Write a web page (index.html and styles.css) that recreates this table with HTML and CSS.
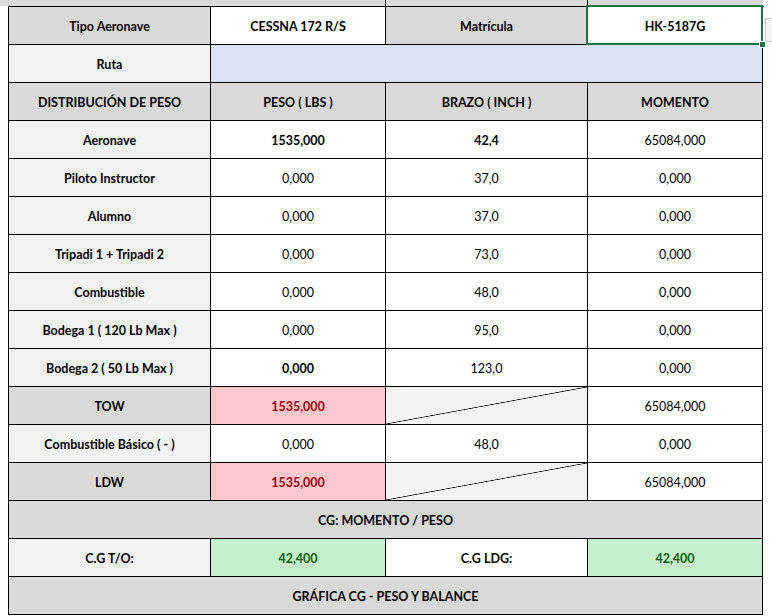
FILE: index.html
```html
<!DOCTYPE html>
<html lang="es">
<head>
<meta charset="utf-8">
<title>Peso y Balance</title>
<link rel="stylesheet" href="styles.css">
</head>
<body>
<div class="strip"><div class="s s1"></div><div class="s s2"></div><div class="s s3"></div></div>
<div class="sheet">
  <div class="c hd b">Tipo Aeronave</div>
  <div class="c b">CESSNA 172 R/S</div>
  <div class="c hd b">Matrícula</div>
  <div class="c b sel">HK-5187G<span class="handle"></span><span class="qa"><span class="qa-dash"></span></span></div>

  <div class="c lb b">Ruta</div>
  <div class="c blue span3"></div>

  <div class="c hd b">DISTRIBUCIÓN DE PESO</div>
  <div class="c hd b">PESO ( LBS )</div>
  <div class="c hd b">BRAZO ( INCH )</div>
  <div class="c hd b">MOMENTO</div>

  <div class="c lb b">Aeronave</div>
  <div class="c b">1535,000</div>
  <div class="c b">42,4</div>
  <div class="c">65084,000</div>

  <div class="c lb b">Piloto Instructor</div>
  <div class="c">0,000</div>
  <div class="c">37,0</div>
  <div class="c">0,000</div>

  <div class="c lb b">Alumno</div>
  <div class="c">0,000</div>
  <div class="c">37,0</div>
  <div class="c">0,000</div>

  <div class="c lb b">Tripadi 1 + Tripadi 2</div>
  <div class="c">0,000</div>
  <div class="c">73,0</div>
  <div class="c">0,000</div>

  <div class="c lb b">Combustible</div>
  <div class="c">0,000</div>
  <div class="c">48,0</div>
  <div class="c">0,000</div>

  <div class="c lb b">Bodega 1 ( 120 Lb Max )</div>
  <div class="c">0,000</div>
  <div class="c">95,0</div>
  <div class="c">0,000</div>

  <div class="c lb b">Bodega 2 ( 50 Lb Max )</div>
  <div class="c b">0,000</div>
  <div class="c">123,0</div>
  <div class="c">0,000</div>

  <div class="c hd b">TOW</div>
  <div class="c bad b">1535,000</div>
  <div class="c diag"></div>
  <div class="c">65084,000</div>

  <div class="c lb b">Combustible Básico ( - )</div>
  <div class="c">0,000</div>
  <div class="c">48,0</div>
  <div class="c">0,000</div>

  <div class="c hd b">LDW</div>
  <div class="c bad b">1535,000</div>
  <div class="c diag"></div>
  <div class="c">65084,000</div>

  <div class="c hd b span4">CG: MOMENTO / PESO</div>

  <div class="c lb b">C.G T/O:</div>
  <div class="c good b">42,400</div>
  <div class="c b">C.G LDG:</div>
  <div class="c good b">42,400</div>

  <div class="c hd b span4">GRÁFICA CG - PESO Y BALANCE</div>
</div>
</body>
</html>
```
FILE: styles.css
```css
html, body {
  margin: 0;
  padding: 0;
  background: #ffffff;
}
body {
  font-family: "Lato", "Liberation Sans", sans-serif;
  font-size: 12.5px;
  color: #000;
  width: 772px;
  height: 616px;
  overflow: hidden;
}
.strip {
  display: grid;
  grid-template-columns: 386px 202px 175px;
  height: 6px;
  background: #d9d9d9;
  width: 763px;
}
.s1, .s2 {
  border-right: 1px solid #000;
}
.sheet {
  display: grid;
  grid-template-columns: 202px 175px 202px 175px;
  grid-auto-rows: 38px;
  margin-left: 8px;
  width: 755px;
  border-left: 1px solid #000;
  border-top: 1px solid #000;
}
.c {
  box-sizing: border-box;
  border-right: 1px solid #000;
  border-bottom: 1px solid #000;
  display: flex;
  align-items: center;
  justify-content: center;
  padding-top: 2px;
  background: #fff;
  white-space: nowrap;
}
.b { font-weight: 700; }
.hd { background: #d9d9d9; }
.lb { background: #f2f2f2; }
.blue { background: #d9e1f2; }
.span3 { grid-column: span 3; }
.span4 { grid-column: span 4; }
.bad { background: #ffc7ce; color: #9c0006; }
.good { background: #c6efce; color: #006100; }
.diag {
  background: linear-gradient(to bottom right, #f2f2f2 calc(50% - 0.7px), #000 50%, #f2f2f2 calc(50% + 0.7px));
}
.sel {
  position: relative;
}
.sel::after {
  content: "";
  position: absolute;
  left: -2px;
  top: -2px;
  right: -1px;
  bottom: -1px;
  border: 2px solid #217346;
  pointer-events: none;
}
.handle {
  position: absolute;
  right: -4px;
  bottom: -4px;
  width: 5px;
  height: 5px;
  background: #217346;
  border: 1px solid #fff;
  z-index: 2;
}
.qa {
  position: absolute;
  left: 177px;
  top: 11px;
  width: 20px;
  height: 24px;
  box-sizing: border-box;
  background: #f3f3f3;
  border: 1px solid #c6c6c6;
}
.qa-dash {
  position: absolute;
  left: 6px;
  top: 4px;
  width: 4px;
  height: 1px;
  background: #444;
}
```
